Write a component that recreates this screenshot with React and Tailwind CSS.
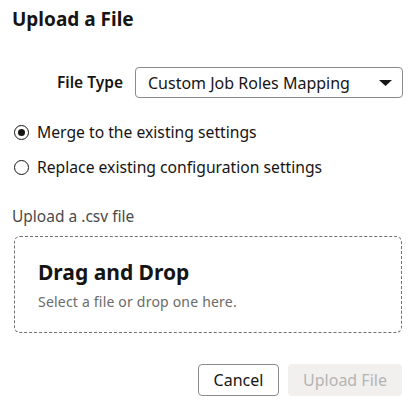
import React from "react";

export default function App() {
  return (
    <div className="w-[415px] h-[403px] bg-white text-[#161513] font-['Noto_Sans',sans-serif] relative overflow-hidden">
      <div className="pl-[12px] pt-[6px]">
        <h1 className="text-[19px] font-bold leading-[26px]">Upload a File</h1>
      </div>
      <div className="flex items-center mt-[35px] pl-[57px]">
        <span className="text-[15.5px] font-semibold w-[78px]">File Type</span>
        <div className="w-[268px] h-[31px] border border-[#8a8a8a] rounded-[4px] flex items-center justify-between pl-[12px] pr-[10px]">
          <span className="text-[16px]">Custom Job Roles Mapping</span>
          <svg width="13" height="6" viewBox="0 0 13 6"><path d="M0 0h13L6.5 6z" fill="#161513" /></svg>
        </div>
      </div>
      <div className="pl-[14px] mt-[23px] flex flex-col gap-[12px]">
        <label className="flex items-center gap-[8px] text-[15.7px] leading-[23px]">
          <span className="w-[15px] h-[15px] rounded-full border-[1.5px] border-[#161513] flex items-center justify-center">
            <span className="w-[7px] h-[7px] rounded-full bg-[#161513]" />
          </span>
          Merge to the existing settings
        </label>
        <label className="flex items-center gap-[8px] text-[15.7px] leading-[23px]">
          <span className="w-[15px] h-[15px] rounded-full border-[1.5px] border-[#161513]" />
          Replace existing configuration settings
        </label>
      </div>
      <div className="pl-[12px] mt-[27px] text-[15.5px] text-[#4a4a48] leading-[20px]">Upload a .csv file</div>
      <div className="mx-[14px] w-[388px] mt-[10px] h-[97px] border border-dashed border-[#6f6f6f] rounded-[6px] pl-[23px] pt-[21px]">
        <div className="text-[21px] font-bold leading-[28px]">Drag and Drop</div>
        <div className="text-[14px] tracking-[0.2px] text-[#6b6a67] mt-[5px]">Select a file or drop one here.</div>
      </div>
      <div className="flex justify-end gap-[9px] pr-[13px] mt-[31px]">
        <button className="w-[81px] h-[32px] border border-[#8a8a8a] rounded-[4px] text-[16px] text-[#161513]">Cancel</button>
        <button className="w-[114px] h-[32px] rounded-[4px] bg-[#f1f0ef] text-[16px] text-[#b5b4b2]">Upload File</button>
      </div>
    </div>
  );
}
